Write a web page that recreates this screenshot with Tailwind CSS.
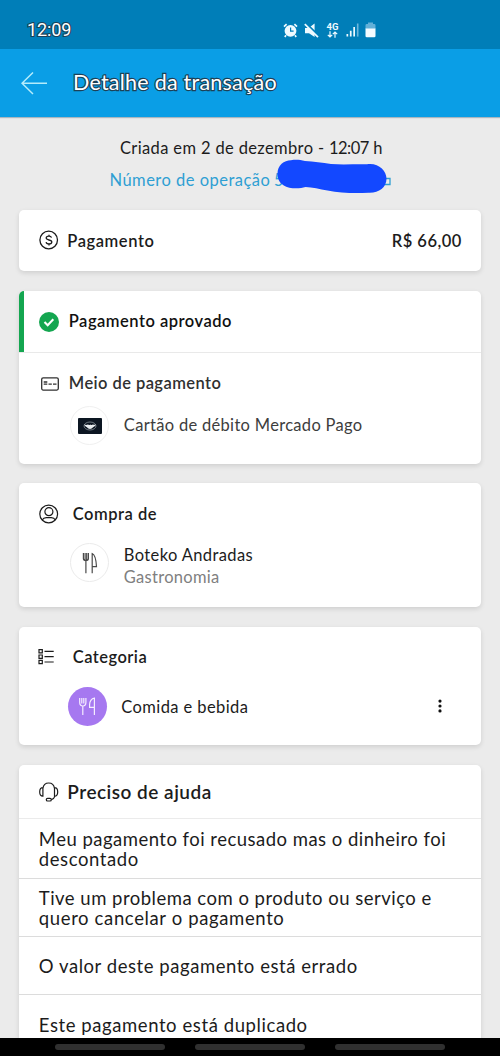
<!DOCTYPE html>
<html lang="pt-BR">
<head>
<meta charset="utf-8">
<title>Detalhe da transação</title>
<script src="https://cdn.jsdelivr.net/npm/@tailwindcss/browser@4"></script>
</head>
<body class="w-[500px] h-[1056px] overflow-hidden bg-[#ebebeb] flex flex-col font-['Lato','Liberation_Sans',sans-serif] text-[16.5px] text-[#1c1c1c] whitespace-nowrap">
  <div class="h-[49px] shrink-0 bg-[#007eb8] flex items-center pl-[27px] pt-[11px]">
    <span class="w-[256px] font-['Roboto'] text-[18px] leading-5 tracking-[-0.1px] text-white [paint-order:stroke_fill] [-webkit-text-stroke:2.2px_#1d4157]">12:09</span>
    <svg class="w-[15px] h-[15px] shrink-0" viewBox="0 0 15 15"><circle cx="7.5" cy="7.8" r="5.9" fill="#eefaff"/><path d="M1 3.7 3.6 1.2M14 3.7 11.4 1.2M3 12.3 1.8 14M12 12.3l1.2 1.7" stroke="#eefaff" stroke-width="1.7"/><path d="M7.6 4.5v3.7h3" fill="none" stroke="#007eb8" stroke-width="1.2"/></svg>
    <svg class="w-[15px] h-[15px] shrink-0 ml-[6px]" viewBox="0 0 15 15"><path d="M1 5h3.6L10.6.5V14L5 10.2H1z" fill="#eefaff"/><path d="M1.8.2 15 13" stroke="#007eb8" stroke-width="2"/><path d="M.8 1.2 14 14.2" stroke="#eefaff" stroke-width="1.7"/></svg>
    <div class="ml-[7.5px] w-[12px] flex flex-col items-center text-[#eefaff]">
      <span class="font-['Roboto'] font-bold text-[9.5px] leading-[8px]">4G</span>
      <svg class="w-[11px] h-[7px]" viewBox="0 0 11 7" fill="none" stroke="#eefaff" stroke-width="1.2"><path d="M3 .3v5.6M.8 3.8 3 6l2.2-2.2M8 6.7V1M5.8 3.2 8 1l2.2 2.2"/></svg>
    </div>
    <svg class="w-[13px] h-[14px] ml-[7px] shrink-0" viewBox="0 0 13 14"><path d="M.5 11h1.700v2.600H.5zM3.900 7.800h1.700v5.800H3.900zM7.300 4H9v9.600H7.300z" fill="#eefaff"/><path d="M10.900.5h1.600v13.100h-1.600z" fill="#6db7dc"/></svg>
    <svg class="w-[11px] h-[16px] ml-[6.500px] shrink-0" viewBox="0 0 11 16"><path d="M3 .5h5V2h1.2a1.3 1.3 0 0 1 1.3 1.3V7H.5V3.300A1.300 1.300 0 0 1 1.800 2H3z" fill="#62b0d8"/><path d="M.5 6.400h10v7.600a1.300 1.300 0 0 1-1.300 1.300H1.800A1.300 1.300 0 0 1 .5 14z" fill="#f4fbff"/></svg>
  </div>
  <div class="h-[68px] shrink-0 bg-[#0a9ee6] flex items-center pl-[21px] shadow-[0_1px_1px_rgba(90,120,140,0.45)] z-10">
    <svg class="w-[27px] h-[24px] shrink-0" viewBox="0 0 27 24" fill="none" stroke="#b5ecfb" stroke-width="1.5"><path d="M26 12.300H1M12 1.500 1 12.300l11 10.700"/></svg>
    <h1 class="ml-[25px] mt-[-1px] text-[21.500px] tracking-[0.230px] text-white [paint-order:stroke_fill] [-webkit-text-stroke:2.400px_#1d4157]">Detalhe da transação</h1>
  </div>

  <div class="h-[93px] shrink-0 pt-[20px] pl-[109.500px] relative">
    <p class="ml-[10.500px] leading-[22px] tracking-[0.360px]">Criada em 2 de dezembro - <span class="tracking-[-0.550px]">12:07</span> h</p>
    <p class="mt-[10px] leading-[22px] tracking-[0.480px] text-[#2f9fd3] flex items-center"><span>Número de operação <span class="ml-[-1px]">5</span></span><svg class="w-[8px] h-[9px] ml-[98.500px] mt-[3px]" viewBox="0 0 8 9"><path d="M0 1.500h7v6H0" fill="none" stroke="#2f9fd3" stroke-width="1.300"/></svg></p>
    <svg class="absolute left-[276px] top-[42px] w-[112px] h-[36px]" viewBox="0 0 112 36"><path d="M1.500 15C1.500 6 8 1.200 15 1.200c5-.7 9-.4 14 .8 9 .5 17 1.500 26 3 12 .9 24 0 36 .3 11-1.800 19.500 6 19.500 14.500 0 9-8 14.500-18 14-15 .7-28 .2-41-2.300-8-1.400-15-3.300-22-3.500C20 31 1.500 30 1.500 15Z" fill="#1348ff"/></svg>
  </div>

  <section class="mx-[19.300px] h-[61px] shrink-0 rounded-[5px] bg-white shadow-[0_2px_5px_rgba(0,0,0,0.12)] flex items-center pl-[19.500px] pr-[19px] font-semibold">
    <svg class="w-[20px] h-[20px] mt-[-1px]" viewBox="0 0 20 20" fill="none" stroke="#1c1c1c" stroke-width="1.300"><circle cx="9.700" cy="10" r="8.800"/><path d="M12.500 7.700C12.200 6.600 11.200 6.200 9.900 6.200 8.300 6.200 7.200 6.900 7.200 8.100c0 2.600 5.600 1.200 5.600 3.900 0 1.200-1.200 1.900-2.800 1.900-1.600 0-2.700-.6-2.900-1.800M10 4.800v1.400M10 13.900v1.500"/></svg>
    <span class="ml-[8.500px] mt-[2px] tracking-[0.560px]">Pagamento</span>
    <span class="ml-auto mt-[2px] tracking-[0.450px]">R$ 66,00</span>
  </section>

  <section class="mx-[19.300px] mt-[20px] h-[172.500px] shrink-0 rounded-[5px] bg-white shadow-[0_2px_5px_rgba(0,0,0,0.12)] flex flex-col">
    <div class="h-[61px] rounded-tl-[5px] border-l-[5px] border-[#14a650] flex items-center pl-[14.500px] font-semibold text-[#111]">
      <svg class="w-[20px] h-[20px]" viewBox="0 0 20 20"><circle cx="10" cy="10" r="10" fill="#14a650"/><path d="m5.500 10 3.200 3.200L14.300 7.300" fill="none" stroke="#fff" stroke-width="2.100"/></svg>
      <span class="ml-[10px] tracking-[0.500px]">Pagamento aprovado</span>
    </div>
    <div class="h-px bg-[#e9e9e9]"></div>
    <div class="mt-[20px] h-[22px] flex items-center pl-[21.500px] font-semibold text-[#303030]">
      <svg class="w-[18px] h-[14px] mt-[-1px]" viewBox="0 0 18 14" fill="none" stroke="#303030" stroke-width="1.300"><rect x=".7" y=".8" width="16.600" height="12.300" rx="1.500"/><path d="M2.700 5h3.600M2.700 7.200h3.600M7.500 7.200h3.300M12 7.200h3.500"/></svg>
      <span class="ml-[10px] mt-[-1px] tracking-[0.420px]">Meio de pagamento</span>
    </div>
    <div class="mt-[11px] h-[39px] flex items-center pl-[51px] text-[#3d3d3d]">
      <div class="w-[39px] h-[39px] shrink-0 rounded-full border border-[#f0f0f0] flex items-center justify-center">
        <svg class="w-[24px] h-[16px]" viewBox="0 0 24 16"><rect width="24" height="16" rx="1" fill="#0c1622"/><ellipse cx="12" cy="8" rx="6" ry="4" fill="none" stroke="#cdd6dc" stroke-width=".5"/><path d="M6.300 6.300c1.500.9 2.400.6 3.600.2.900.5 1.600.6 2.300-.1 1 .7 1.900.8 2.700.1 1 .5 2 .4 2.900-.2-.1 1.300-1.500 2.300-2.800 2.900-.8 1.300-1.800 1.700-3 1.700S9.700 10.500 9 9.300C7.700 8.600 6.400 7.700 6.300 6.300Z" fill="#e8edf0"/></svg>
      </div>
      <span class="ml-[14.500px] tracking-[0.310px]">Cartão de débito Mercado Pago</span>
    </div>
  </section>

  <section class="mx-[19.300px] mt-[19.500px] h-[124px] shrink-0 rounded-[5px] bg-white shadow-[0_2px_5px_rgba(0,0,0,0.12)] flex flex-col">
    <div class="mt-[20px] h-[21px] flex items-center pl-[19.500px] font-semibold">
      <svg class="w-[20px] h-[20px]" viewBox="0 0 20 20" fill="none" stroke="#1c1c1c" stroke-width="1.200"><circle cx="9.700" cy="10" r="8.900"/><circle cx="9.900" cy="7.700" r="4"/><path d="M3.300 15.900c.9-1.900 2.500-2.300 4-2.300h5c1.500 0 3.100.4 4 2.300"/></svg>
      <span class="ml-[14px] mt-[1px] tracking-[0.520px]">Compra de</span>
    </div>
    <div class="mt-[19.500px] h-[44px] flex items-center pl-[51px]">
      <div class="w-[39px] h-[39px] mt-[-6px] shrink-0 rounded-full border border-[#ebebeb] flex items-center justify-center">
        <svg class="w-[16px] h-[22px]" viewBox="0 0 16 22" fill="none" stroke="#4a4a4a" stroke-width="1.200"><path d="M1.400 1v5.500c0 1.500 1.100 2.200 2.500 2.200s2.500-.7 2.500-2.200V1M3.100 1v7M4.700 1v7M3.900 8v13.300M10.200 21.300V1.500c2.800 1 3.900 6 4.300 13.200h-4.200"/></svg>
      </div>
      <div class="ml-[14.500px] leading-[22px]">
        <p class="tracking-[0.380px]">Boteko Andradas</p>
        <p class="tracking-[0.280px] text-[#808080]">Gastronomia</p>
      </div>
    </div>
  </section>

  <section class="mx-[19.300px] mt-[19.500px] h-[118.500px] shrink-0 rounded-[5px] bg-white shadow-[0_2px_5px_rgba(0,0,0,0.12)] flex flex-col">
    <div class="mt-[20px] h-[20px] flex items-center pl-[18.500px] font-semibold">
      <svg class="w-[17px] h-[17px]" viewBox="0 0 17 17" fill="none" stroke="#1c1c1c" stroke-width="1.200"><path d="M1 1.600h3.300v3.300H1zM1 7h3.300v3.300H1zM1 12.400h3.300v3.300H1zM6.500 3.300h9.200M6.500 8.700h9.200M6.500 14h9.200"/></svg>
      <span class="ml-[18px] mt-[1px] tracking-[0.450px]">Categoria</span>
    </div>
    <div class="mt-[20px] h-[39px] flex items-center pl-[48.500px] pr-[38.500px]">
      <div class="w-[39px] h-[39px] shrink-0 rounded-full bg-[#a678f0] flex items-center justify-center">
        <svg class="w-[18px] h-[19px]" viewBox="0 0 18 19" fill="none" stroke="#f5edff" stroke-width="1.200"><path d="M1.700 1v4.300c0 2.600 1.200 3.700 3.100 3.700s3.100-1.100 3.100-3.700V1M3.800 1v5.500M5.800 1v5.500M4.800 9v9M16.400 18V1.200c-3 .2-4.800 3.300-4.800 6.400v2.800h4.800"/></svg>
      </div>
      <span class="ml-[14.500px] mt-[2px] tracking-[0.410px]">Comida e bebida</span>
      <svg class="ml-auto w-[4px] h-[14px]" viewBox="0 0 4 14" fill="#111"><circle cx="2" cy="2.100" r="1.600"/><circle cx="2" cy="7" r="1.600"/><circle cx="2" cy="11.900" r="1.600"/></svg>
    </div>
  </section>

  <section class="mx-[19.300px] mt-[20px] flex-1 min-h-0 rounded-t-[5px] bg-white shadow-[0_2px_5px_rgba(0,0,0,0.12)] text-[18.500px] leading-[19.500px]">
    <div class="h-[54px] border-b border-[#ebebeb] flex items-center pl-[19.500px] font-semibold text-[19px]">
      <svg class="w-[20px] h-[20px]" viewBox="0 0 20 20" fill="none" stroke="#1c1c1c" stroke-width="1.200"><path d="M3.900 6.300C4.400 3 6.700 1 9.700 1s5.300 2 5.800 5.300M15.900 14.200c-.5 1.800-1.800 3-3.500 3.400M3.900 5.700v8.400C1.800 14.100.7 12.700.7 9.900s1.100-4.200 3.200-4.200ZM15.500 5.700v8.400c2.100 0 3.200-1.400 3.200-4.200s-1.100-4.200-3.200-4.200Z"/><rect x="7.300" y="16.300" width="5" height="2.700" rx="1.300"/></svg>
      <span class="ml-[8.500px] tracking-[0.490px]">Preciso de ajuda</span>
    </div>
    <div class="h-[59.500px] pt-[3px] border-b border-[#dcdcdc] flex flex-col justify-center pl-[19.500px]"><p class="tracking-[0.480px]">Meu pagamento foi recusado mas o dinheiro foi</p><p class="tracking-[0.580px]">descontado</p></div>
    <div class="h-[58.500px] pt-[3px] border-b border-[#dcdcdc] flex flex-col justify-center pl-[19.500px]"><p class="tracking-[0.490px]">Tive um problema com o produto ou serviço e</p><p class="tracking-[0.630px]">quero cancelar o pagamento</p></div>
    <div class="h-[58px] pt-[3px] border-b border-[#dcdcdc] flex items-center pl-[19.500px]"><p class="tracking-[0.550px]">O valor deste pagamento está errado</p></div>
    <div class="h-[58.500px] pt-[3px] flex items-center pl-[19.500px]"><p class="tracking-[0.580px]">Este pagamento está duplicado</p></div>
  </section>

  <nav class="h-[18px] shrink-0 bg-black flex items-start gap-[29.500px] pt-[6px] pl-[54.500px] z-10">
    <div class="w-[110.500px] h-[5.500px] rounded-full bg-[#303030]"></div>
    <div class="w-[110.500px] h-[5.500px] rounded-full bg-[#303030]"></div>
    <div class="w-[110.500px] h-[5.500px] rounded-full bg-[#303030]"></div>
  </nav>
</body>
</html>
